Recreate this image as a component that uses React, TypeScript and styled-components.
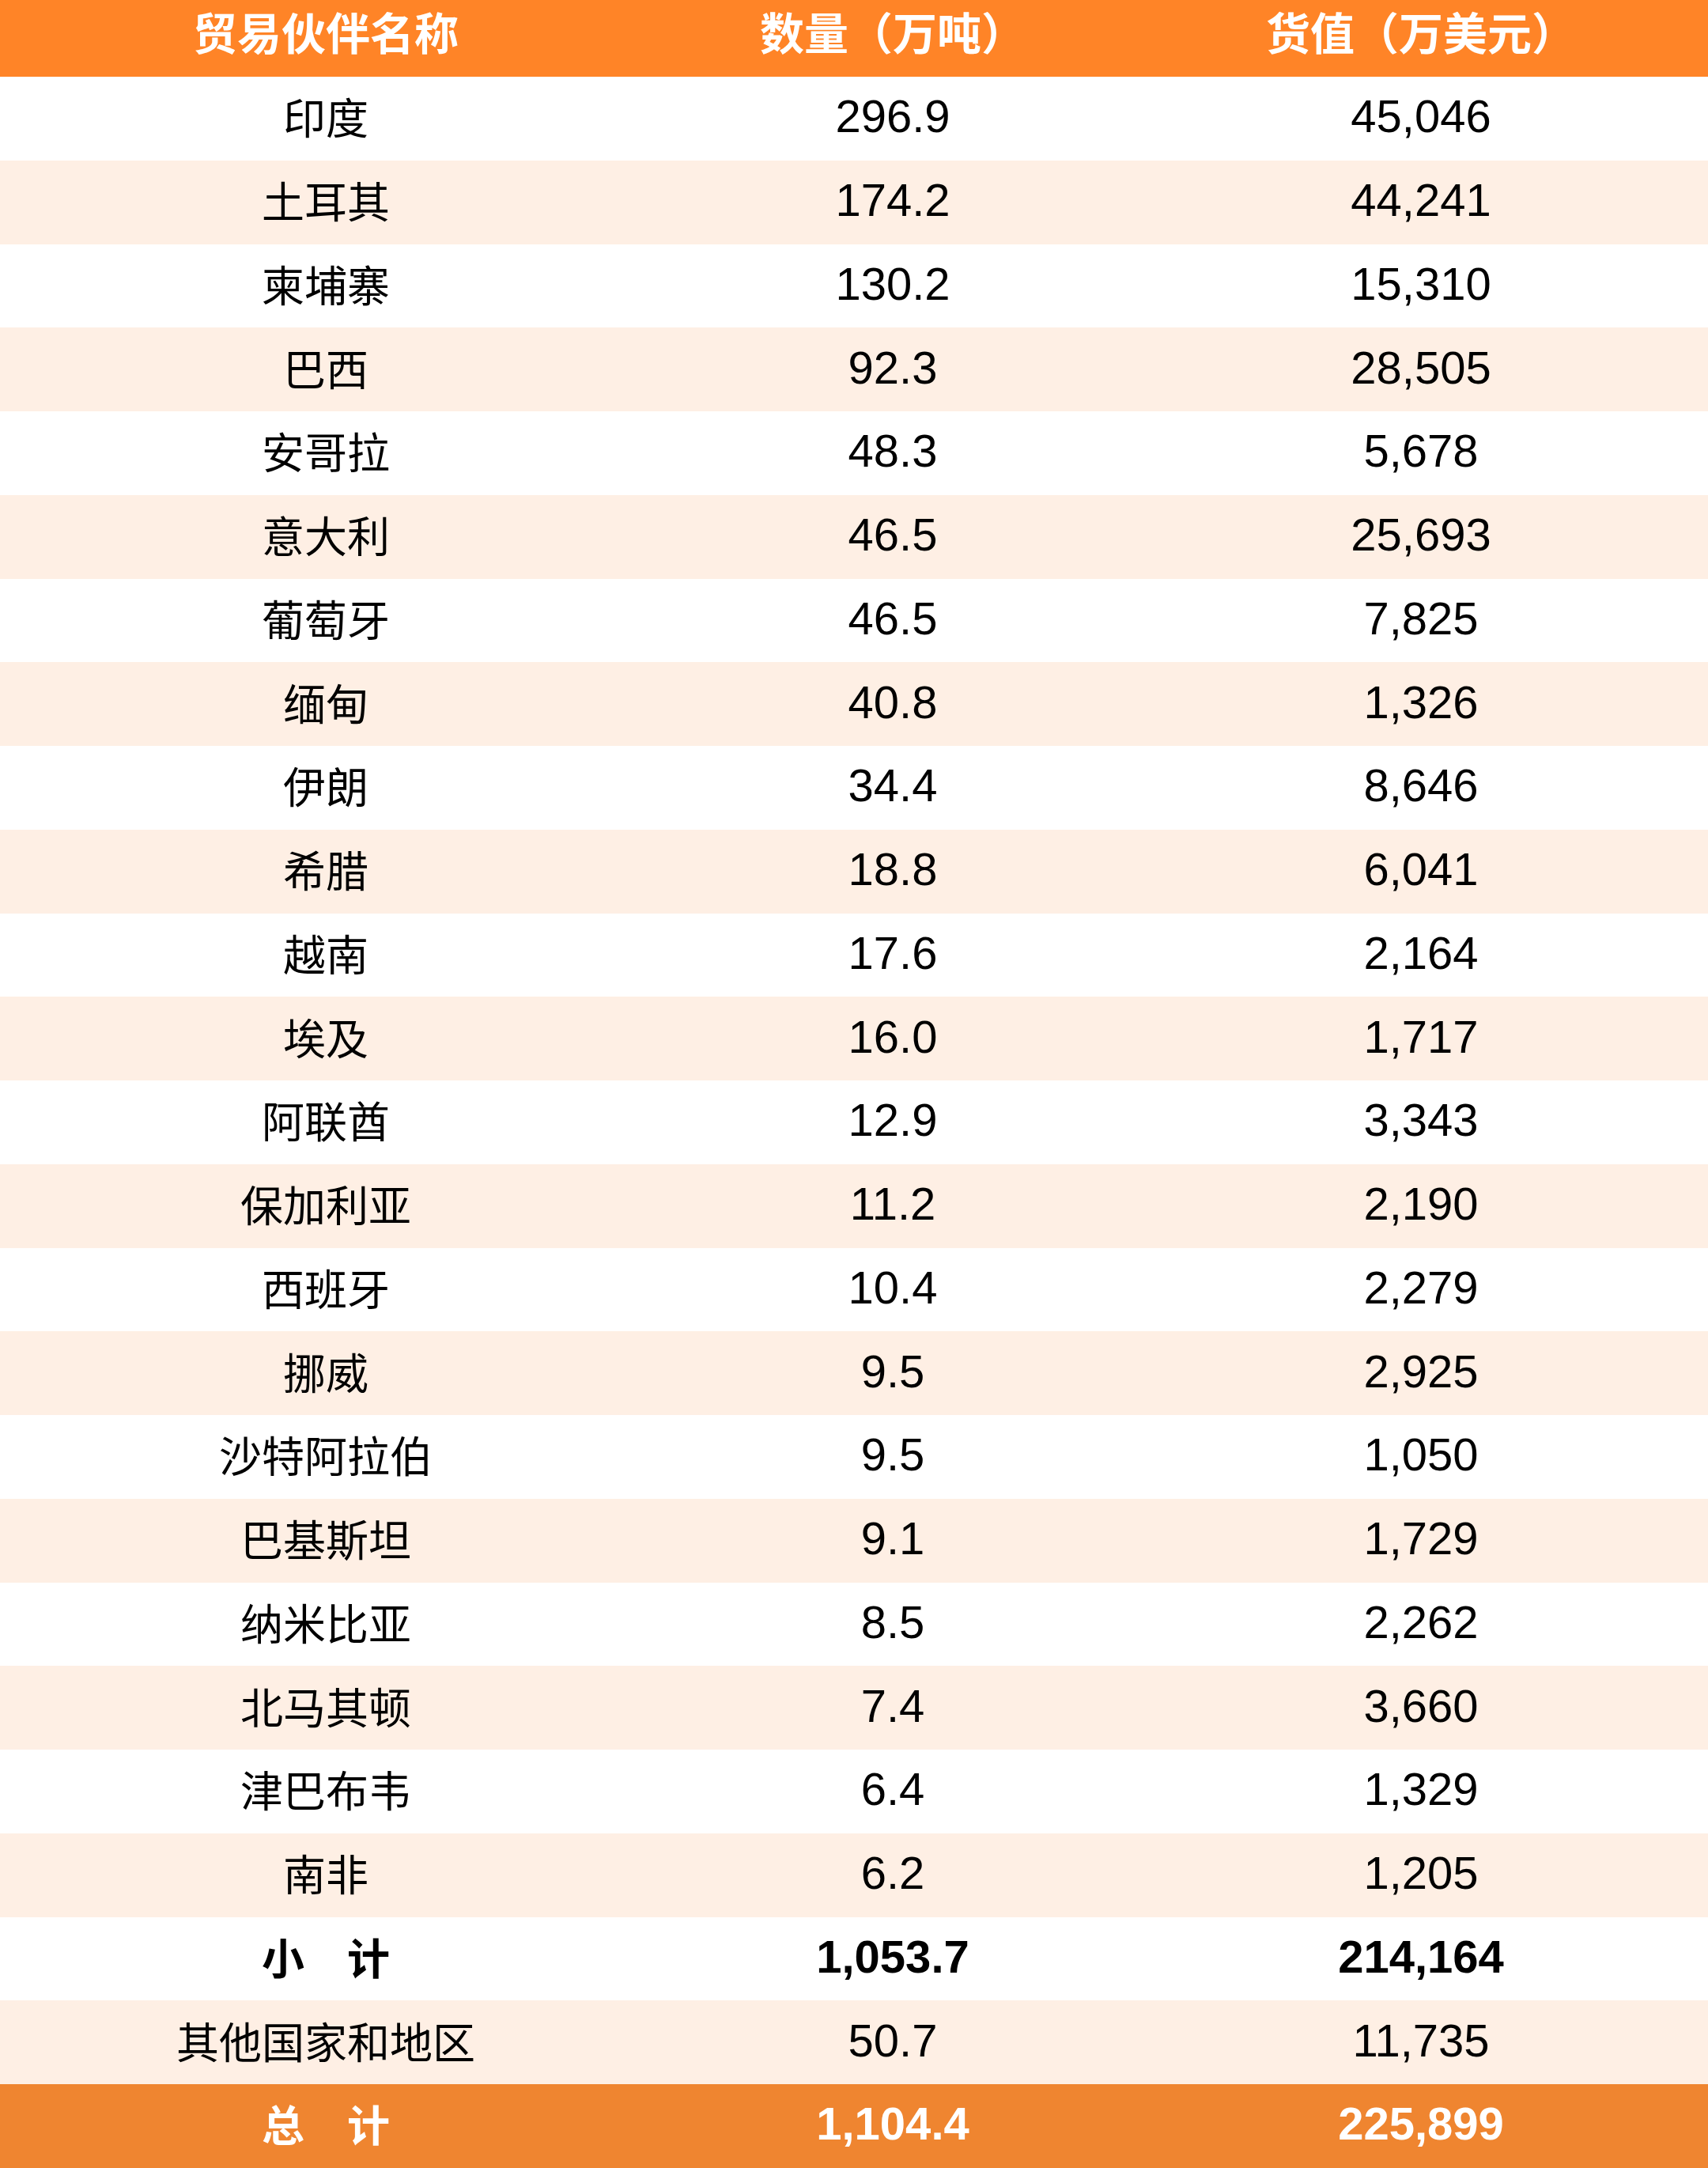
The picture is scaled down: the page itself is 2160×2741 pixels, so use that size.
import styled, { createGlobalStyle } from 'styled-components';

const GlobalStyle = createGlobalStyle`
  html, body {
    margin: 0;
    padding: 0;
    background: #ffffff;
  }
  body {
    font-family: "Liberation Sans", "Noto Sans CJK SC", sans-serif;
  }
`;

// Whole table, three columns
const Table = styled.div`
  width: 2160px;
  display: flex;
  flex-direction: column;
`;

type Tone = 'white' | 'stripe' | 'total';

const rowBg: Record<Tone, string> = {
  white: '#ffffff',
  stripe: '#feefe4',
  total: '#ef8530',
};

const HeaderRow = styled.div`
  display: grid;
  grid-template-columns: 824px 610px 726px;
  height: 97px;
  background: #ff8427;
  color: #ffffff;
  font-weight: 700;
  font-size: 56px;
`;

const Row = styled.div<{ $tone: Tone; $bold?: boolean }>`
  display: grid;
  grid-template-columns: 824px 610px 726px;
  height: 105.76px;
  background: ${({ $tone }) => rowBg[$tone]};
  color: ${({ $tone }) => ($tone === 'total' ? '#ffffff' : '#000000')};
  font-weight: ${({ $bold }) => ($bold ? 700 : 400)};
  font-size: 58px;
`;

const Cell = styled.div`
  display: flex;
  align-items: center;
  justify-content: center;
  white-space: pre;
  line-height: 1;
  padding-bottom: 5px;
`;

const HeadCell = styled(Cell)`
  padding-bottom: 20px;
  font-family: "Noto Sans CJK SC", sans-serif;
`;

const NameCell = styled(Cell)`
  font-family: "Noto Sans CJK SC", sans-serif;
  font-size: 54px;
`;

const rows: [string, string, string][] = [
  ['印度', '296.9', '45,046'],
  ['土耳其', '174.2', '44,241'],
  ['柬埔寨', '130.2', '15,310'],
  ['巴西', '92.3', '28,505'],
  ['安哥拉', '48.3', '5,678'],
  ['意大利', '46.5', '25,693'],
  ['葡萄牙', '46.5', '7,825'],
  ['缅甸', '40.8', '1,326'],
  ['伊朗', '34.4', '8,646'],
  ['希腊', '18.8', '6,041'],
  ['越南', '17.6', '2,164'],
  ['埃及', '16.0', '1,717'],
  ['阿联酋', '12.9', '3,343'],
  ['保加利亚', '11.2', '2,190'],
  ['西班牙', '10.4', '2,279'],
  ['挪威', '9.5', '2,925'],
  ['沙特阿拉伯', '9.5', '1,050'],
  ['巴基斯坦', '9.1', '1,729'],
  ['纳米比亚', '8.5', '2,262'],
  ['北马其顿', '7.4', '3,660'],
  ['津巴布韦', '6.4', '1,329'],
  ['南非', '6.2', '1,205'],
];

const App = () => {
  return (
    <>
      <GlobalStyle />
      <Table>
        <HeaderRow>
          <HeadCell>贸易伙伴名称</HeadCell>
          <HeadCell>数量（万吨）</HeadCell>
          <HeadCell>货值（万美元）</HeadCell>
        </HeaderRow>

        {rows.map(([name, qty, value], i) => (
          <Row key={name} $tone={i % 2 === 0 ? 'white' : 'stripe'}>
            <NameCell>{name}</NameCell>
            <Cell>{qty}</Cell>
            <Cell>{value}</Cell>
          </Row>
        ))}

        <Row $tone="white" $bold>
          <NameCell>小　计</NameCell>
          <Cell>1,053.7</Cell>
          <Cell>214,164</Cell>
        </Row>
        <Row $tone="stripe">
          <NameCell>其他国家和地区</NameCell>
          <Cell>50.7</Cell>
          <Cell>11,735</Cell>
        </Row>
        <Row $tone="total" $bold>
          <NameCell>总　计</NameCell>
          <Cell>1,104.4</Cell>
          <Cell>225,899</Cell>
        </Row>
      </Table>
    </>
  );
};

export default App;
